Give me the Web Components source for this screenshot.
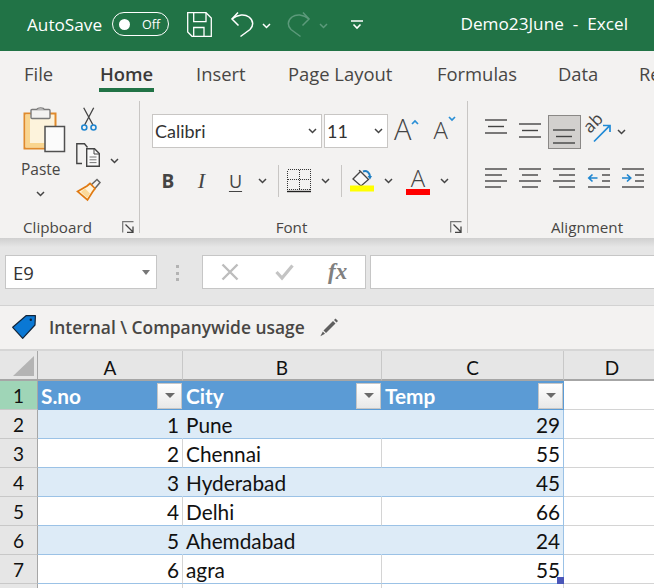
<!DOCTYPE html>
<html>
<head>
<meta charset="utf-8">
<title>Excel</title>
<style>
  html, body { margin: 0; padding: 0; width: 654px; height: 588px; overflow: hidden; background: #fff; }
  body { display: flex; flex-direction: column; font-family: "Open Sans", "Noto Sans", sans-serif; }
</style>
</head>
<body>
<xl-titlebar></xl-titlebar>
<xl-tabs></xl-tabs>
<xl-ribbon></xl-ribbon>
<xl-formula-bar></xl-formula-bar>
<xl-sensitivity>Internal \ Companywide usage</xl-sensitivity>
<xl-sheet></xl-sheet>

<script>
(function () {
    'use strict';

    const DK = '#444';
    const chevron = c => `<polyline points="1,1 4.5,4.5 8,1" fill="none" stroke="${c}" stroke-width="1.5"/>`;
    const lines = rows => rows.map(r => `<line x1="${r[0]}" x2="${r[1]}" y1="${r[2]}" y2="${r[2]}" stroke="${DK}" stroke-width="1.4"/>`).join('');

    // name: [width, height, svg body]
    const ICONS = {
        chev: [9, 6, chevron('#444')],
        'chev-white': [9, 6, chevron('#fff')],
        'chev-dim': [9, 6, chevron('#5c9a7b')],
        save: [25, 25, `<g fill="none" stroke="#fff" stroke-width="1.3"><path d="M.7.7H19L24.3 6V24.3H5L.7 20Z"/><path d="M6.7.7V9.7H19V.7"/><path d="M6.7 24.3V15.5H17V24.3"/></g>`],
        undo: [23, 26, `<g fill="none" stroke="#fff" stroke-width="1.5"><path d="M7 1.5L1 8L7.5 14.5"/><path d="M1 8C7 3 14 3 18 6C23 10 22.5 15 19 18.5L9.5 25.5"/></g>`],
        redo: [23, 26, `<g fill="none" stroke="#5c9a7b" stroke-width="1.5" transform="translate(23 0) scale(-1 1)"><path d="M7 1.5L1 8L7.5 14.5"/><path d="M1 8C7 3 14 3 18 6C23 10 22.5 15 19 18.5L9.5 25.5"/></g>`],
        qat: [12, 10, `<path d="M0 1H12" stroke="#fff" stroke-width="1.5"/><polyline points="2.5,4.5 6,8 9.5,4.5" fill="none" stroke="#fff" stroke-width="1.6"/>`],
        paste: [43, 45, `<rect x="1.5" y="6.5" width="31" height="35" fill="#fdf3dc" stroke="#e08a2c" stroke-width="2"/>
            <path d="M2.5 7.5H7V36H31V40.5H2.5Z" fill="#f9d58f"/><rect x="8" y="2.5" width="19" height="9" rx="1" fill="#f3f2f1" stroke="#7a7a7a" stroke-width="1.4"/>
            <path d="M14 2.5C14 .2 21 .2 21 2.5" fill="#f3f2f1" stroke="#7a7a7a" stroke-width="1.2"/>
            <rect x="22" y="19.5" width="19.5" height="25" fill="#fbfbfb" stroke="#505050" stroke-width="1.5"/>`],
        cut: [18, 24, `<path d="M3.7 .7L13 18M13.7 .7L4.6 18" fill="none" stroke="#444" stroke-width="1.3"/>
            <circle cx="4.3" cy="20.5" r="2.5" fill="none" stroke="#1f86d0" stroke-width="1.6"/><circle cx="13.5" cy="20.5" r="2.5" fill="none" stroke="#1f86d0" stroke-width="1.6"/>`],
        copy: [24, 24, `<path d="M6 20.5H.8V.7H8.5L11.5 4.5" fill="none" stroke="#444" stroke-width="1.4"/>
            <path d="M10.7 5.7H18.5L23.3 10.5V23.3H10.7Z" fill="#fafafa" stroke="#444" stroke-width="1.4"/><path d="M18 6V11H23" fill="none" stroke="#444"/>
            <path d="M13.5 14H20.5M13.5 16.8H20.5M13.5 19.6H20.5" stroke="#777" stroke-width="1"/>`],
        brush: [25, 23, `<path d="M15 7L21 1.5L24 4.5L18.5 11" fill="#f3f2f1" stroke="#666" stroke-width="1.5"/>
            <path d="M1.5 13.5L11 8L14 5.5L19 10.5L16.5 14L11.5 22Z" fill="#fff4dc" stroke="#e07a12" stroke-width="1.7"/><path d="M5 14L11 20L14 15.5L9 10.5Z" fill="#fbd99a"/>`],
        launcher: [12, 12, `<path d="M.7 11.5V.7H11.5" fill="none" stroke="#777" stroke-width="1.2"/><path d="M3.5 3.5L11 11M11 5.5V11.3H5" fill="none" stroke="#444" stroke-width="1.3"/>`],
        borders: [24, 24, `<path d="M.5 .5H23.5V20.5H.5ZM12.5 .5V20.5M.5 10.5H23.5" fill="none" stroke="#333" stroke-width="1" stroke-dasharray="1 1" shape-rendering="crispEdges"/><path d="M0 22.5H24" stroke="#222" stroke-width="1.4"/>`],
        fill: [24, 22, `<path d="M3 9L10.5 1.5L18.5 9.5L11 16Z" fill="#f8f8f8" stroke="#444" stroke-width="1.3"/><path d="M10.5 1.5L9 .2" stroke="#444" stroke-width="1.2"/>
            <path d="M13 1.5C17 0 19.5 3 20 6" fill="none" stroke="#1f7fc4" stroke-width="2"/><path d="M17.5 6H22L20 9.5Z" fill="#1f7fc4"/><rect x="0" y="15.5" width="24" height="6" fill="#ffff00"/>`],
        'al-top': [22, 15, lines([[0, 22, 1], [3, 19, 7.5], [0, 22, 14]])],
        'al-mid': [22, 15, lines([[0, 22, 1], [3, 19, 7.5], [0, 22, 14]])],
        'al-bot': [22, 15, lines([[0, 22, 1], [3, 19, 7.5], [0, 22, 14]])],
        'al-left': [22, 20, lines([[0, 22, 1], [0, 17, 7], [0, 22, 13], [0, 16, 19]])],
        'al-center': [22, 20, lines([[0, 22, 1], [3, 19, 7], [0, 22, 13], [3, 19, 19]])],
        'al-right': [22, 20, lines([[0, 22, 1], [6, 22, 7], [0, 22, 13], [6, 22, 19]])],
        outdent: [22, 20, lines([[0, 22, 1], [14, 22, 7], [14, 22, 13], [0, 22, 19]]) + `<path d="M.5 10H9.5M4.5 6.5L.8 10L4.5 13.5" fill="none" stroke="#1f86d0" stroke-width="1.7"/>`],
        indent: [22, 20, lines([[0, 22, 1], [13, 22, 7], [13, 22, 13], [0, 22, 19]]) + `<path d="M0 10H9M5 6.5L8.7 10L5 13.5" fill="none" stroke="#1f86d0" stroke-width="1.7"/>`],
        orient: [26, 25, `<text transform="translate(4 16) rotate(-45)" font-family="Open Sans, sans-serif" font-size="17" fill="#444">ab</text><path d="M8 23.5L24 7.3M17 7.5H24V14" fill="none" stroke="#1f8ad6" stroke-width="1.7"/>`],
        cancel: [18, 18, `<path d="M1.5 1.5L16.5 16.5M16.5 1.5L1.5 16.5" stroke="#bdbdbd" stroke-width="2.4"/>`],
        check: [19, 16, `<path d="M1.5 8L7 14L17.5 1.5" fill="none" stroke="#c4c4c4" stroke-width="3.2"/>`],
        tag: [24, 24, `<path d="M.7 12.3L14 .7H23.4L23 10L10.7 23.3Z" fill="#0a78d4" stroke="#10243a" stroke-width="1.2" stroke-linejoin="round"/><circle cx="18.8" cy="4.8" r="1.2" fill="#10243a"/>`],
        pencil: [18, 19, `<path d="M3.5 12.5L13 3L15.5 5.5L6 15Z" fill="#5f5f5f"/><path d="M14 2L15.5 .6L18 3.1L16.5 4.6Z" fill="#5f5f5f"/><path d="M2.8 13.5L5 15.7L.4 18.3Z" fill="#5f5f5f"/>`],
        corner: [21, 20, `<path d="M21 0V20H0Z" fill="#b4b4b4"/>`]
    };

    class XlIcon extends HTMLElement {
        connectedCallback() {
            if (this.shadowRoot) return;
            const icon = ICONS[this.getAttribute('name')];
            const root = this.attachShadow({ mode: 'open' });
            root.innerHTML = `<style>:host{display:block;line-height:0}svg{display:block;overflow:visible}</style>
                <svg width="${icon[0]}" height="${icon[1]}" viewBox="0 0 ${icon[0]} ${icon[1]}">${icon[2]}</svg>`;
        }
    }
    customElements.define('xl-icon', XlIcon);

    class XlTitlebar extends HTMLElement {
        constructor() {
            super();
            this.attachShadow({ mode: 'open' }).innerHTML = `
            <style>
              :host { display: flex; flex: none; height: 51px; background: #217346; color: #fff; align-items: center; box-sizing: border-box; padding: 0 26px 3px 27px; font-size: 17.2px; }
              .toggle { display: flex; align-items: center; box-sizing: border-box; width: 57px; height: 24px; margin-left: 10px; border: 1.3px solid #fff; border-radius: 12px; padding-left: 6px; }
              .knob { width: 11px; height: 11px; border-radius: 50%; background: #fff; }
              .off { font-size: 12.5px; margin-left: 12px; }
              .title { margin-left: auto; white-space: pre; font-size: 17.2px; position: relative; top: -1px; }
              xl-icon[name=save] { margin-left: 18px; }
              xl-icon[name=undo] { margin-left: 19px; }
              .c1 { margin-left: 8px; margin-top: 3px; }
              .c2 { margin-left: 9px; margin-top: 3px; }
              xl-icon[name=qat] { margin-left: 23px; margin-top: 2px; }
            </style>
            <span>AutoSave</span>
            <div class="toggle"><div class="knob"></div><span class="off">Off</span></div>
            <xl-icon name="save"></xl-icon>
            <xl-icon name="undo"></xl-icon>
            <xl-icon class="c1" name="chev-white"></xl-icon>
            <xl-icon name="redo" style="margin-left:16px"></xl-icon>
            <xl-icon class="c2" name="chev-dim"></xl-icon>
            <xl-icon name="qat"></xl-icon>
            <span class="title">Demo23June  -  Excel</span>`;
        }
    }
    customElements.define('xl-titlebar', XlTitlebar);

    class XlTabs extends HTMLElement {
        constructor() {
            super();
            const tabs = [['File'], ['Home', 1], ['Insert'], ['Page Layout'], ['Formulas'], ['Data'], ['Re']];
            const root = this.attachShadow({ mode: 'open' });
            let html = `<style>
              :host { display: block; flex: none; height: 44px; background: #f3f2f1; overflow: hidden; box-sizing: border-box; padding-top: 9px; white-space: nowrap; color: #484644; font-size: 18.4px; }
              .row { display: grid; grid-template-columns: 24px 76px 96px 92px 149px 121px 81px 100px; }
              .t { line-height: 28px; justify-self: start; }
              .on { font-weight: 600; color: #3b3a39; border-bottom: 4.5px solid #217346; padding: 0 1px; margin-left: -1px; }
            </style><div class="row"><span></span>`;
            tabs.forEach(t => { html += `<span class="t${t[1] ? ' on' : ''}">${t[0]}</span>`; });
            root.innerHTML = html + '</div>';
        }
    }
    customElements.define('xl-tabs', XlTabs);

    class XlGroup extends HTMLElement {
        constructor() {
            super();
            const launcher = this.hasAttribute('launcher');
            this.attachShadow({ mode: 'open' }).innerHTML = `
            <style>
              :host { display: flex; flex-direction: column; flex: none; box-sizing: border-box; height: 132px; border-right: 1px solid #c8c6c4; }
              .body { flex: 1; min-height: 0; }
              .foot { display: flex; align-items: center; height: 12px; color: #484644; font-size: 15.2px; }
              .label { flex: 1; text-align: center; }
              xl-icon { margin: 0 5px 0 7px; }
            </style>
            <div class="body"><slot></slot></div>
            <div class="foot"><span class="label">${this.getAttribute('label')}</span>${launcher ? '<xl-icon name="launcher"></xl-icon>' : ''}</div>`;
        }
    }
    customElements.define('xl-group', XlGroup);

    class XlClipboard extends HTMLElement {
        constructor() {
            super();
            this.attachShadow({ mode: 'open' }).innerHTML = `
            <style>
              :host { display: block; flex: none; }
              .wrap { display: flex; padding-top: 6px; }
              .paste { display: flex; flex-direction: column; width: 55px; padding-left: 21px; box-sizing: content-box; color: #484644; font-size: 15.5px; }
              .paste xl-icon[name=paste] { margin-left: 2px; }
              .paste span { margin-top: 6px; line-height: 22px; }
              .paste .c { margin: 11px 0 0 15px; }
              .tools { display: grid; grid-template-rows: 36px 35px 24px; grid-template-columns: 34px 12px; }
              xl-icon[name=cut] { margin-left: 4px; }
              .cc { align-self: center; margin-top: 1px; }
            </style>
            <xl-group label="Clipboard" launcher style="width:140px">
              <div class="wrap">
                <div class="paste">
                  <xl-icon name="paste"></xl-icon>
                  <span>Paste</span>
                  <xl-icon class="c" name="chev"></xl-icon>
                </div>
                <div class="tools">
                  <xl-icon name="cut" style="grid-column:1/3"></xl-icon>
                  <xl-icon name="copy"></xl-icon>
                  <xl-icon class="cc" name="chev"></xl-icon>
                  <xl-icon name="brush" style="grid-column:1/3"></xl-icon>
                </div>
              </div>
            </xl-group>`;
        }
    }
    customElements.define('xl-clipboard', XlClipboard);

    class XlFontGroup extends HTMLElement {
        constructor() {
            super();
            this.attachShadow({ mode: 'open' }).innerHTML = `
            <style>
              :host { display: block; flex: none; }
              .wrap { padding: 13px 0 0 12px; }
              .r1 { display: flex; height: 34px; }
              .box { display: flex; align-items: center; justify-content: space-between; box-sizing: border-box; height: 34px; background: #fff; border: 1px solid #c8c6c4; padding: 0 4px 0 2px; font-family: "Lato", "Open Sans", sans-serif; font-size: 18px; color: #333; }
              .big, .small { font-weight: 300; color: #444; line-height: 1; font-family: "Open Sans", sans-serif; }
              .big { font-size: 29px; margin-left: 6px; }
              .small { font-size: 24px; margin-left: 14px; margin-top: 4px; }
              .r1 svg { display: block; margin-top: 5px; }
              .r2 { display: grid; grid-template-columns: 32px 35px 33px 20px 12px 29px 24px 8px 34px 18px 42px 10px; height: 30px; margin-top: 17px; place-items: center; color: #444; font-size: 19px; }
              .b { font-weight: 700; } 
              .i { font-family: "Liberation Serif", serif; font-style: italic; font-size: 22px; }
              .u { font-size: 18px; text-decoration: underline; text-underline-offset: 3px; }
              .sep { width: 1px; height: 32px; background: #c8c6c4; }
              .fc { display: flex; flex-direction: column; align-items: center; width: 24px; }
              .fc span { font-size: 24px; font-weight: 300; line-height: 21px; }
              .fc i { display: block; width: 24px; height: 6px; background: #ff0000; margin-top: 1px; }
            </style>
            <xl-group label="Font" launcher style="width:328px">
              <div class="wrap">
                <div class="r1">
                  <div class="box" style="width:170px"><span>Calibri</span><xl-icon name="chev"></xl-icon></div>
                  <div class="box" style="width:64px;margin-left:2px"><span>11</span><xl-icon name="chev"></xl-icon></div>
                  <span class="big">A</span><svg width="8" height="6"><polyline points="1,5 4,2 7,5" fill="none" stroke="#2a8fd6" stroke-width="1.7"/></svg>
                  <span class="small">A</span><svg width="8" height="6" style="margin-top:2px"><polyline points="1,1 4,4 7,1" fill="none" stroke="#2a8fd6" stroke-width="1.7"/></svg>
                </div>
                <div class="r2">
                  <span class="b">B</span><span class="i">I</span><span class="u">U</span><xl-icon name="chev"></xl-icon>
                  <span class="sep"></span>
                  <xl-icon name="borders"></xl-icon><xl-icon name="chev"></xl-icon>
                  <span class="sep"></span>
                  <xl-icon name="fill"></xl-icon><xl-icon name="chev"></xl-icon>
                  <div class="fc"><span>A</span><i></i></div><xl-icon name="chev"></xl-icon>
                </div>
              </div>
            </xl-group>`;
        }
    }
    customElements.define('xl-font-group', XlFontGroup);

    class XlAlignGroup extends HTMLElement {
        constructor() {
            super();
            this.attachShadow({ mode: 'open' }).innerHTML = `
            <style>
              :host { display: block; flex: none; }
              .wrap { display: grid; grid-template-columns: 34px 34px 34px 36px 32px; grid-template-rows: 34px 20px; row-gap: 19px; padding: 14px 0 0 11px; justify-items: center; }
              .sel { box-sizing: border-box; width: 33px; height: 34px; background: #d2d0ce; border: 1px solid #8a8886; padding: 13px 0 0 4px; }
            </style>
            <xl-group label="Alignment" style="width:238px;border:0">
              <div class="wrap">
                <xl-icon name="al-top" style="margin-top:4px"></xl-icon>
                <xl-icon name="al-mid" style="margin-top:8px"></xl-icon>
                <div class="sel"><xl-icon name="al-bot"></xl-icon></div>
                <xl-icon name="orient" style="margin-top:3px"></xl-icon>
                <xl-icon name="chev" style="justify-self:start;margin-top:14px"></xl-icon>
                <xl-icon name="al-left"></xl-icon>
                <xl-icon name="al-center"></xl-icon>
                <xl-icon name="al-right"></xl-icon>
                <xl-icon name="outdent"></xl-icon>
                <xl-icon name="indent"></xl-icon>
              </div>
            </xl-group>`;
        }
    }
    customElements.define('xl-align-group', XlAlignGroup);

    class XlRibbon extends HTMLElement {
        constructor() {
            super();
            this.attachShadow({ mode: 'open' }).innerHTML = `
            <style>
              :host { display: flex; flex: none; height: 143px; box-sizing: border-box; padding-top: 6px; background: #f3f2f1; overflow: hidden; }
            </style>
            <xl-clipboard></xl-clipboard>
            <xl-font-group></xl-font-group>
            <xl-align-group></xl-align-group>`;
        }
    }
    customElements.define('xl-ribbon', XlRibbon);

    class XlFormulaBar extends HTMLElement {
        constructor() {
            super();
            this.attachShadow({ mode: 'open' }).innerHTML = `
            <style>
              :host { display: flex; flex: none; height: 68px; box-sizing: border-box; padding: 17px 0 0 5px; background: linear-gradient(#cfcfcf 0, #e6e6e6 9px); border-bottom: 1px solid #d2d2d2; }
              .box { box-sizing: border-box; height: 34px; background: #fff; border: 1px solid #c6c6c6; display: flex; align-items: center; }
              .name { width: 152px; padding: 0 6px 0 7px; justify-content: space-between; color: #333; font-size: 18.5px; }
              .tri { width: 0; height: 0; border: 4px solid transparent; border-top: 5px solid #777; border-bottom: 0; }
              .dots { display: flex; flex-direction: column; gap: 3.5px; width: 4px; margin: 10px 22px 0 19px; }
              .dots i { display: block; width: 3px; height: 3px; background: #b3b3b3; }
              .fn { width: 164px; padding-left: 18px; }
              .fx { font-family: "Liberation Serif", serif; font-style: italic; font-weight: 700; font-size: 23px; color: #808080; margin-left: 34px; }
              .input { flex: 1; margin-left: 4px; border-right: 0; }
            </style>
            <div class="box name"><span>E9</span><div class="tri"></div></div>
            <div class="dots"><i></i><i></i><i></i></div>
            <div class="box fn">
              <xl-icon name="cancel"></xl-icon>
              <xl-icon name="check" style="margin-left:36px"></xl-icon>
              <span class="fx">fx</span>
            </div>
            <div class="box input"></div>`;
        }
    }
    customElements.define('xl-formula-bar', XlFormulaBar);

    class XlSensitivity extends HTMLElement {
        constructor() {
            super();
            this.attachShadow({ mode: 'open' }).innerHTML = `
            <style>
              :host { display: flex; flex: none; align-items: center; height: 43px; box-sizing: border-box; padding: 0 0 1px 12px; background: #f3f2f1; color: #484644; font-size: 17.4px; font-weight: 600; }
              .text { margin-left: 13px; }
              xl-icon[name=pencil] { margin-left: 15px; }
            </style>
            <xl-icon name="tag"></xl-icon>
            <span class="text"><slot></slot></span>
            <xl-icon name="pencil"></xl-icon>`;
        }
    }
    customElements.define('xl-sensitivity', XlSensitivity);

    class XlSheet extends HTMLElement {
        constructor() {
            super();
            const rows = [[1, 'Pune', 29], [2, 'Chennai', 55], [3, 'Hyderabad', 45], [4, 'Delhi', 66], [5, 'Ahemdabad', 24], [6, 'agra', 55]];
            const filter = '<span class="filter"><i></i></span>';
            let html = `
            <style>
              :host { display: grid; flex: 1; min-height: 0; overflow: hidden; grid-template-columns: 38px 145px 199px 182px 96px; grid-auto-rows: 29px; grid-template-rows: 30px; border-top: 2px solid #d6d6d6; background: #fff; font-family: "Lato", "Open Sans", sans-serif; font-size: 20.8px; color: #111; }
              div { box-sizing: border-box; display: flex; align-items: center; white-space: nowrap; }
              .head { background: #e6e6e6; border-right: 1px solid #c8c8c8; border-bottom: 2px solid #a6a6a6; justify-content: center; font-size: 19px; padding-top: 4px; }
              .corner { justify-content: flex-start; align-items: flex-end; padding: 0 0 3px 13px; background: #e6e6e6; border-bottom: 2px solid #a6a6a6; border-right: 1px solid #a6a6a6; }
              .rh { background: #e6e6e6; border-right: 1px solid #a6a6a6; border-bottom: 1px solid #c8c8c8; justify-content: center; font-size: 19px; }
              .rh.act { background: #9fd5b7; }
              .th { background: #5b9bd5; color: #fff; font-weight: 700; justify-content: space-between; padding: 0 1px 0 3px; }
              .cell { padding: 0 3px; border-bottom: 1px solid #9bc2e6; border-right: 1px solid #d4d4d4; }
              .band { background: #ddebf7; border-right-color: #ddebf7; }
              .num { justify-content: flex-end; }
              .last { border-right-color: #9bc2e6; position: relative; }
              .free { border-right: 0; border-bottom: 1px solid #d4d4d4; }
              .filter { box-sizing: border-box; width: 25px; height: 26px; display: flex; align-items: center; justify-content: center; background: linear-gradient(#fff, #e8e8e8); border: 1px solid #c6c6c6; }
              .filter i { width: 0; height: 0; border: 5px solid transparent; border-top: 5px solid #6a6a6a; border-bottom: 0; }
              .handle { position: absolute; right: -1px; bottom: -1px; width: 7px; height: 7px; background: #4a56b8; }
              .tail { border-right: 1px solid #d4d4d4; }
            </style>
            <div class="corner"><xl-icon name="corner"></xl-icon></div>
            <div class="head">A</div><div class="head">B</div><div class="head">C</div><div class="head" style="border-right:0">D</div>
            <div class="rh act">1</div>
            <div class="th">S.no${filter}</div><div class="th">City${filter}</div><div class="th">Temp${filter}</div><div class="free"></div>`;
            rows.forEach((r, i) => {
                const band = i % 2 === 0 ? ' band' : '';
                html += `<div class="rh">${i + 2}</div>
                    <div class="cell num${band}">${r[0]}</div>
                    <div class="cell${band}">${r[1]}</div>
                    <div class="cell num last${band}">${r[2]}${i === rows.length - 1 ? '<span class="handle"></span>' : ''}</div>
                    <div class="free"></div>`;
            });
            html += `<div class="rh"></div><div class="tail"></div><div class="tail"></div><div class="tail"></div><div></div>`;
            this.attachShadow({ mode: 'open' }).innerHTML = html;
        }
    }
    customElements.define('xl-sheet', XlSheet);
})();
</script>
</body>
</html>
